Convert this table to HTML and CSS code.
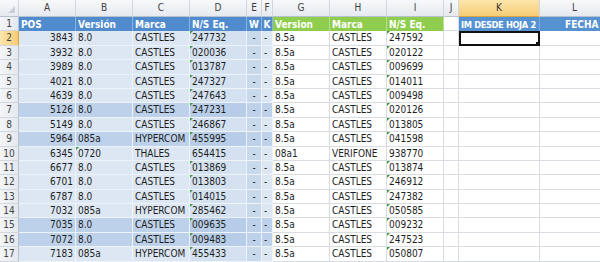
FILE: index.html
```html
<!DOCTYPE html>
<html>
<head>
<meta charset="utf-8">
<link rel="stylesheet" href="styles.css">
</head>
<body>
<div class="sheet" id="sheet">
  <div class="ch corner"><span class="tri"></span></div>
  <div class="ch">A</div><div class="ch">B</div><div class="ch">C</div><div class="ch">D</div>
  <div class="ch">E</div><div class="ch">F</div><div class="ch">G</div><div class="ch">H</div>
  <div class="ch">I</div><div class="ch">J</div><div class="ch sel">K</div><div class="ch">L</div>

  <div class="rh">1</div>
  <div class="hd blue">POS</div><div class="hd blue">Versión</div><div class="hd blue">Marca</div><div class="hd blue">N/S Eq.</div>
  <div class="hd blue ctr">W</div><div class="hd blue ctr">K</div>
  <div class="hd green">Version</div><div class="hd green">Marca</div><div class="hd green">N/S Eq.</div>
  <div class="c"></div>
  <div class="hd blue2 tight">IM DESDE HOJA 2</div><div class="hd blue2 fecha">FECHA</div>
</div>
<script src="script.js"></script>
</body>
</html>
```

FILE: script.js
```js
var rows = [
  [3843,"8.0","CASTLES","247732","8.5a","CASTLES","247592",0],
  [3932,"8.0","CASTLES","020036","8.5a","CASTLES","020122",0],
  [3989,"8.0","CASTLES","013787","8.5a","CASTLES","009699",0],
  [4021,"8.0","CASTLES","247327","8.5a","CASTLES","014011",0],
  [4639,"8.0","CASTLES","247643","8.5a","CASTLES","009498",0],
  [5126,"8.0","CASTLES","247231","8.5a","CASTLES","020126",1],
  [5149,"8.0","CASTLES","246867","8.5a","CASTLES","013805",0],
  [5964,"085a","HYPERCOM","455995","8.5a","CASTLES","041598",1],
  [6345,"0720","THALES","654415","08a1","VERIFONE","938770",0],
  [6677,"8.0","CASTLES","013869","8.5a","CASTLES","013874",0],
  [6701,"8.0","CASTLES","013803","8.5a","CASTLES","246912",0],
  [6787,"8.0","CASTLES","014015","8.5a","CASTLES","247382",0],
  [7032,"085a","HYPERCOM","285462","8.5a","CASTLES","050585",0],
  [7035,"8.0","CASTLES","009635","8.5a","CASTLES","009232",1],
  [7072,"8.0","CASTLES","009483","8.5a","CASTLES","247523",1],
  [7183,"085a","HYPERCOM","455433","8.5a","CASTLES","050807",0]
];
var sheet = document.getElementById("sheet");
function cell(cls, text, tri) {
  var d = document.createElement("div");
  d.className = cls;
  if (tri) { var t = document.createElement("span"); t.className = "err"; d.appendChild(t); }
  if (text !== undefined && text !== "") d.appendChild(document.createTextNode(text));
  sheet.appendChild(d);
}
rows.forEach(function (r, i) {
  var n = i + 2;
  var band = r[7] ? " dark" : "";
  var isText = r[1] === "0720";
  cell("rh" + (n === 2 ? " sel" : ""), String(n));
  cell("c tb num" + band, String(r[0]));
  cell("c tb" + band, r[1], isText);
  cell("c tb" + band, r[2]);
  cell("c tb tbd" + band, r[3], n !== 10);
  cell("c tb tbe ctr" + band, "-");
  cell("c tb" + band, "-");
  cell("c", r[4]);
  cell("c", r[5]);
  cell("c", r[6], n !== 10);
  cell("c", "");
  cell("c" + (n === 2 ? " active" : ""), "");
  cell("c", "");
});
```

FILE: styles.css
```css
* { box-sizing: border-box; }
html, body { margin: 0; padding: 0; background: #ffffff; overflow: hidden; }
body { width: 600px; height: 262px; }

.sheet {
  display: grid;
  grid-template-columns: 19px 57px 57px 57px 57px 15px 11px 57px 57px 57px 15px 81px 70px;
  grid-template-rows: 17px;
  grid-auto-rows: 14.4px;
  font-family: "Liberation Sans Narrow", "DejaVu Sans Condensed", "Liberation Sans", sans-serif;
  font-size: 10px;
  color: #1e1e1e;
  width: 620px;
}

.ch {
  background: linear-gradient(#f7f9fb, #e6eaef);
  border-right: 1px solid #d2d7de;
  border-bottom: 1px solid #b7c2cf;
  color: #3d3d3d;
  text-align: center;
  line-height: 16px;
  font-size: 10px;
}
.ch.sel {
  background: linear-gradient(#fbe6ad, #f5cc74);
  border-bottom-color: #d6a743;
  color: #333;
}
.corner { position: relative; }
.corner .tri {
  position: absolute;
  right: 3px;
  bottom: 3px;
  width: 0;
  height: 0;
  border-left: 7px solid transparent;
  border-bottom: 7px solid #c9ced6;
}

.rh {
  background: linear-gradient(90deg, #f3f5f8, #e5e9ee);
  border-right: 1px solid #b7c2cf;
  border-bottom: 1px solid #d2d7de;
  color: #444;
  text-align: center;
  line-height: 14px;
  font-size: 10px;
}
.rh.sel {
  background: linear-gradient(90deg, #fbe6ad, #f5cc74);
  border-right-color: #d6a743;
}

.c {
  border-right: 1px solid #d9dde3;
  border-bottom: 1px solid #d9dde3;
  line-height: 14px;
  padding: 0 2px;
  white-space: nowrap;
  overflow: hidden;
  position: relative;
}

.hd {
  font-weight: bold;
  color: #ffffff;
  line-height: 15px;
  padding: 0 2px;
  white-space: nowrap;
  overflow: hidden;
  border-right: 1px solid rgba(255,255,255,0.35);
}
.blue { background: #4f8bcd; }
.blue2 { background: #5692d2; border-right: 1px solid #7aa9dc; }
.green { background: #8fcd4f; }
.ctr { text-align: center; padding: 0; }
.tight { padding: 0 0 0 2px; letter-spacing: -0.35px; font-size: 9.2px; }
.fecha { padding-left: 25px; }

.tb {
  background: #dce7f3;
  border-right-color: #eef3f9;
  border-bottom-color: #eef3f9;
}
.tb.tbd { background: #d3e1f0; }
.tb.tbe { background: #c8d9ec; }
.tb.dark { background: #bdd2ea; }
.tb.tbd.dark { background: #b7cde7; }
.num { text-align: right; }

.err {
  position: absolute;
  left: 0;
  top: 0;
  width: 0;
  height: 0;
  border-top: 3px solid #3b9a3b;
  border-right: 3px solid transparent;
}

.active {
  border: 2px solid #111;
}
.active::after {
  content: "";
  position: absolute;
  right: -4px;
  bottom: -4px;
  width: 5px;
  height: 5px;
  background: #111;
  border: 1px solid #fff;
}
```
